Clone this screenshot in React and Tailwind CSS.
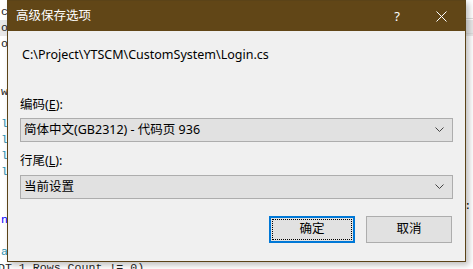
import React from "react";

const codeLines = [
  { t: "ce", c: "text-[#1e1e1e]" },
  { t: "or", c: "text-[#1e1e1e]", hl: true },
  { t: "or", c: "text-[#1e1e1e]" },
  { t: "", c: "" },
  { t: " I", c: "text-[#1e1e1e]" },
  { t: "ws", c: "text-[#1e1e1e]" },
  { t: "", c: "" },
  { t: "l.", c: "text-[#2b91af]" },
  { t: "l.", c: "text-[#2b91af]" },
  { t: "l.", c: "text-[#2b91af]" },
  { t: "l.", c: "text-[#2b91af]" },
  { t: "", c: "" },
  { t: "", c: "" },
  { t: "ng", c: "text-[#0000ff]" },
  { t: "", c: "" },
  { t: "ab", c: "text-[#2b91af]" },
];

function Chevron() {
  return (
    <svg width="9" height="6" viewBox="0 0 9 6" className="shrink-0">
      <path d="M0.5 0.5 L4.5 4.5 L8.5 0.5" fill="none" stroke="#444" strokeWidth="1" />
    </svg>
  );
}

function Select({ text }) {
  return (
    <div className="flex items-center justify-between h-[24px] border border-[#adadad] bg-[#e1e1e1] pl-[3px] pr-[8px]">
      <span className="text-[12.5px] text-black leading-none">{text}</span>
      <Chevron />
    </div>
  );
}

export default function App() {
  return (
    <div
      className="relative w-[473px] h-[269px] overflow-hidden bg-white"
      style={{ fontFamily: '"Noto Sans", "Noto Sans CJK SC", sans-serif' }}
    >
      {/* editor behind the dialog */}
      <div className="pt-[4px] font-['Liberation_Mono',monospace] text-[11.6px] leading-[16px]">
        {codeLines.map((l, i) => (
          <div key={i} className={`h-[16px] whitespace-pre pl-[1px] ${l.c} ${l.hl ? "bg-[#e8e8e8]" : ""}`}>
            {l.t}
          </div>
        ))}
        <div className="whitespace-pre text-[#1e1e1e] -ml-[2px] leading-[12px] mt-[2px]">DT.1.Rows.Count != 0)</div>
      </div>
      <div className="absolute right-0 top-[18px] w-[8px] h-[1px] bg-[#dcdcdc]" />
      <div className="absolute right-0 top-[33px] w-[8px] h-[1px] bg-[#dcdcdc]" />
      <div className="absolute right-[2px] top-[198px] text-[11px] text-black font-['Liberation_Mono',monospace]">:</div>

      {/* dialog */}
      <div className="absolute left-[7px] top-0 w-[459px] h-[262px] flex flex-col border border-[#5b4318] bg-[#f0f0f0] shadow-[3px_3px_6px_rgba(0,0,0,0.25)]">
        <div className="h-[30px] flex items-center bg-[#614617] text-white">
          <span className="pl-[8px] text-[12.5px] leading-none">高级保存选项</span>
          <span className="ml-auto mr-[36px] text-[13px] leading-none">?</span>
          <svg width="11" height="11" viewBox="0 0 11 11" className="mr-[18px]">
            <path d="M0.5 0.5 L10.5 10.5 M10.5 0.5 L0.5 10.5" stroke="white" strokeWidth="1" />
          </svg>
        </div>
        <div className="flex flex-col px-[12px]">
          <div className="mt-[16px] pl-[2px] text-[12.5px] leading-[16px] text-black">
            C:\Project\YTSCM\CustomSystem\Login.cs
          </div>
          <div className="mt-[34px] text-[12.5px] leading-[16px] text-black">
            编码(<span className="underline">E</span>):
          </div>
          <div className="mt-[5px]">
            <Select text="简体中文(GB2312) - 代码页 936" />
          </div>
          <div className="mt-[11px] text-[12.5px] leading-[16px] text-black">
            行尾(<span className="underline">L</span>):
          </div>
          <div className="mt-[6px]">
            <Select text="当前设置" />
          </div>
          <div className="mt-[17px] flex justify-end gap-[11px] pr-[1px]">
            <button className="w-[86px] h-[27px] border-2 border-[#0078d7] bg-[#e1e1e1] p-[1px]">
              <div className="w-full h-full border border-dotted border-black flex items-center justify-center text-[12.5px] text-black leading-none">
                确定
              </div>
            </button>
            <button className="w-[86px] h-[27px] border border-[#adadad] bg-[#e1e1e1] flex items-center justify-center text-[12.5px] text-black leading-none">
              取消
            </button>
          </div>
        </div>
      </div>
    </div>
  );
}
